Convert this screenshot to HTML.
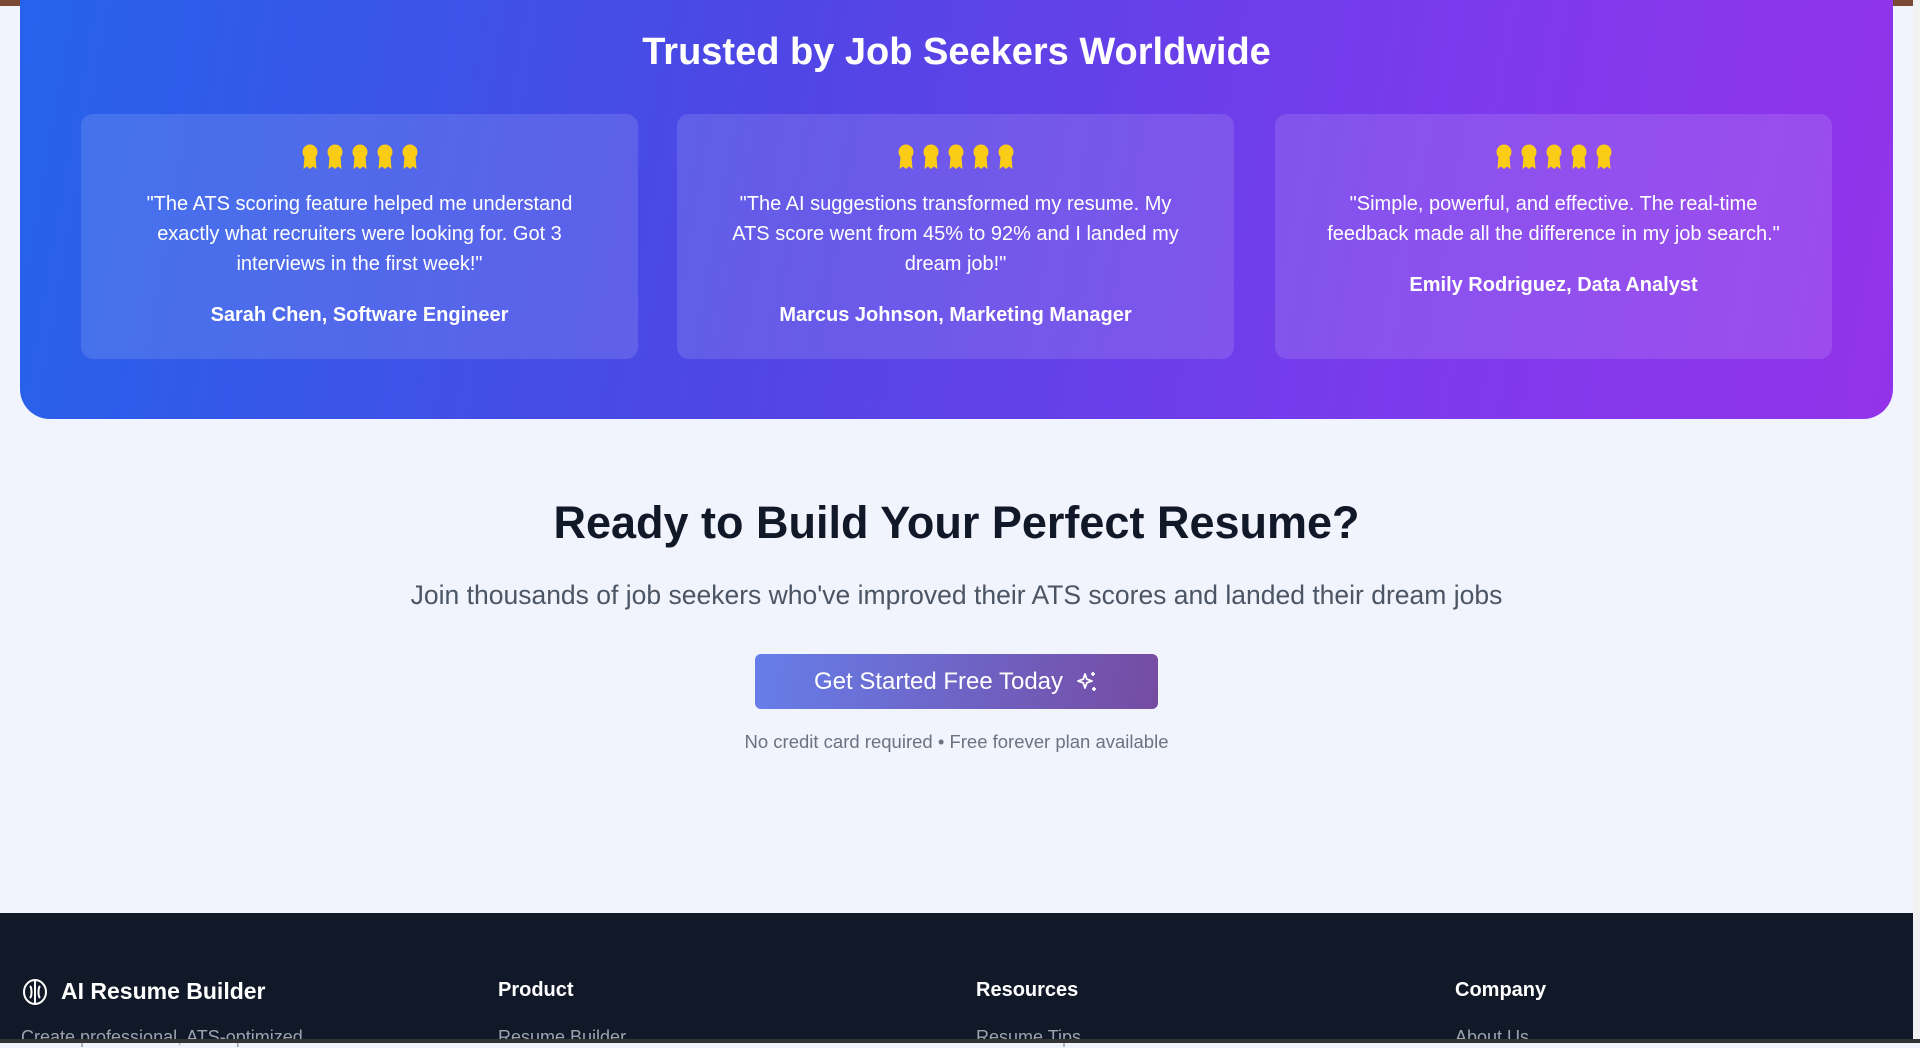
<!DOCTYPE html>
<html><head><meta charset="utf-8"><style>
*{margin:0;padding:0;box-sizing:border-box}
body{width:1920px;height:1043px;overflow:hidden;background:#f1f3fd;font-family:"Liberation Sans",sans-serif;position:relative}
.topbar{position:absolute;left:0;top:0;width:1920px;height:6px;background:#7a4a35}
.panel{position:absolute;left:20px;top:-40px;width:1873px;height:459px;border-radius:30px;background:linear-gradient(100deg,#2563eb 0%,#4f46e5 40%,#7c3aed 75%,#9333ea 100%)}
.title{position:absolute;top:31px;left:0;width:1913px;text-align:center;color:#fff;font-weight:bold;font-size:38px}
.card{position:absolute;top:114px;width:557px;height:245px;border-radius:12px;background:rgba(255,255,255,0.12);color:#fff;text-align:center}
.stars{margin-top:30px;height:26px;display:flex;justify-content:center;gap:5px}
.q{margin:19px auto 0;width:470px;font-size:20px;line-height:30px}
.n{margin-top:25px;font-size:20px;font-weight:bold}
h2{position:absolute;top:497px;left:0;width:1913px;text-align:center;font-size:45px;color:#111827;font-weight:bold}
.sub{position:absolute;top:580px;left:0;width:1913px;text-align:center;font-size:26.5px;color:#4b5563}
.btn{position:absolute;left:755px;top:654px;width:403px;height:55px;border-radius:6px;background:linear-gradient(100deg,#667eea,#764ba2);color:#fff;font-size:24px;display:flex;align-items:center;justify-content:center;gap:12px}
.small{position:absolute;top:731px;left:0;width:1913px;text-align:center;font-size:18.5px;color:#6b7280}
.footer{position:absolute;left:0;top:913px;width:1913px;height:130px;background:#111827;color:#fff}
.fh{position:absolute;top:66px;font-size:20px;font-weight:bold}
.fl{position:absolute;top:114px;font-size:18px;color:#9ca3af}
.scroll{position:absolute;right:0;top:0;width:7px;height:1043px;background:#f1f1f1}
.bottom{position:absolute;left:0;top:1039px;width:1920px;height:4px;background:#333}
</style></head><body>
<div class="topbar"></div>
<div class="panel"></div>
<div class="title">Trusted by Job Seekers Worldwide</div>
<svg width="0" height="0" style="position:absolute"><defs><symbol id="aw" viewBox="0 0 20 26"><circle cx="10" cy="8" r="7.5" fill="#facc15"/><path d="M4.5 12 L3.5 25 L7 22.5 L10 25 L13 22.5 L16.5 25 L15.5 12 Z" fill="#facc15"/></symbol></defs></svg>
<div class="card" style="left:81px"><div class="stars"><svg width="20" height="26"><use href="#aw"/></svg><svg width="20" height="26"><use href="#aw"/></svg><svg width="20" height="26"><use href="#aw"/></svg><svg width="20" height="26"><use href="#aw"/></svg><svg width="20" height="26"><use href="#aw"/></svg></div>
<div class="q">"The ATS scoring feature helped me understand exactly what recruiters were looking for. Got 3 interviews in the first week!"</div><div class="n">Sarah Chen, Software Engineer</div></div>
<div class="card" style="left:677px"><div class="stars"><svg width="20" height="26"><use href="#aw"/></svg><svg width="20" height="26"><use href="#aw"/></svg><svg width="20" height="26"><use href="#aw"/></svg><svg width="20" height="26"><use href="#aw"/></svg><svg width="20" height="26"><use href="#aw"/></svg></div>
<div class="q">"The AI suggestions transformed my resume. My ATS score went from 45% to 92% and I landed my dream job!"</div><div class="n">Marcus Johnson, Marketing Manager</div></div>
<div class="card" style="left:1275px"><div class="stars"><svg width="20" height="26"><use href="#aw"/></svg><svg width="20" height="26"><use href="#aw"/></svg><svg width="20" height="26"><use href="#aw"/></svg><svg width="20" height="26"><use href="#aw"/></svg><svg width="20" height="26"><use href="#aw"/></svg></div>
<div class="q">"Simple, powerful, and effective. The real-time feedback made all the difference in my job search."</div><div class="n">Emily Rodriguez, Data Analyst</div></div>
<h2>Ready to Build Your Perfect Resume?</h2>
<div class="sub">Join thousands of job seekers who've improved their ATS scores and landed their dream jobs</div>
<div class="btn">Get Started Free Today <svg width="24" height="24" viewBox="0 0 24 24" fill="none" stroke="#fff" stroke-width="1.8" stroke-linejoin="round"><path d="M10 4 L11.8 9.2 L17 11 L11.8 12.8 L10 18 L8.2 12.8 L3 11 L8.2 9.2 Z"/><path d="M18 2v4M16 4h4M19 17v4M17 19h4"/></svg></div>
<div class="small">No credit card required • Free forever plan available</div>
<div class="footer">
<svg style="position:absolute;left:21px;top:65px" width="28" height="28" viewBox="0 0 28 28" fill="none" stroke="#fff" stroke-width="2"><ellipse cx="14" cy="14" rx="11" ry="12"/><path d="M14 2v24M9 8c2 2 2 10 0 12M19 8c-2 2-2 10 0 12"/></svg>
<div class="fh" style="left:61px;top:65px;font-size:23px">AI Resume Builder</div>
<div class="fh" style="left:498px">Product</div>
<div class="fh" style="left:976px">Resources</div>
<div class="fh" style="left:1455px">Company</div>
<div class="fl" style="left:21px">Create professional, ATS-optimized</div>
<div class="fl" style="left:498px">Resume Builder</div>
<div class="fl" style="left:976px">Resume Tips</div>
<div class="fl" style="left:1455px">About Us</div>
</div>
<div class="scroll"></div>
<div class="bottom"></div>
</body></html>
